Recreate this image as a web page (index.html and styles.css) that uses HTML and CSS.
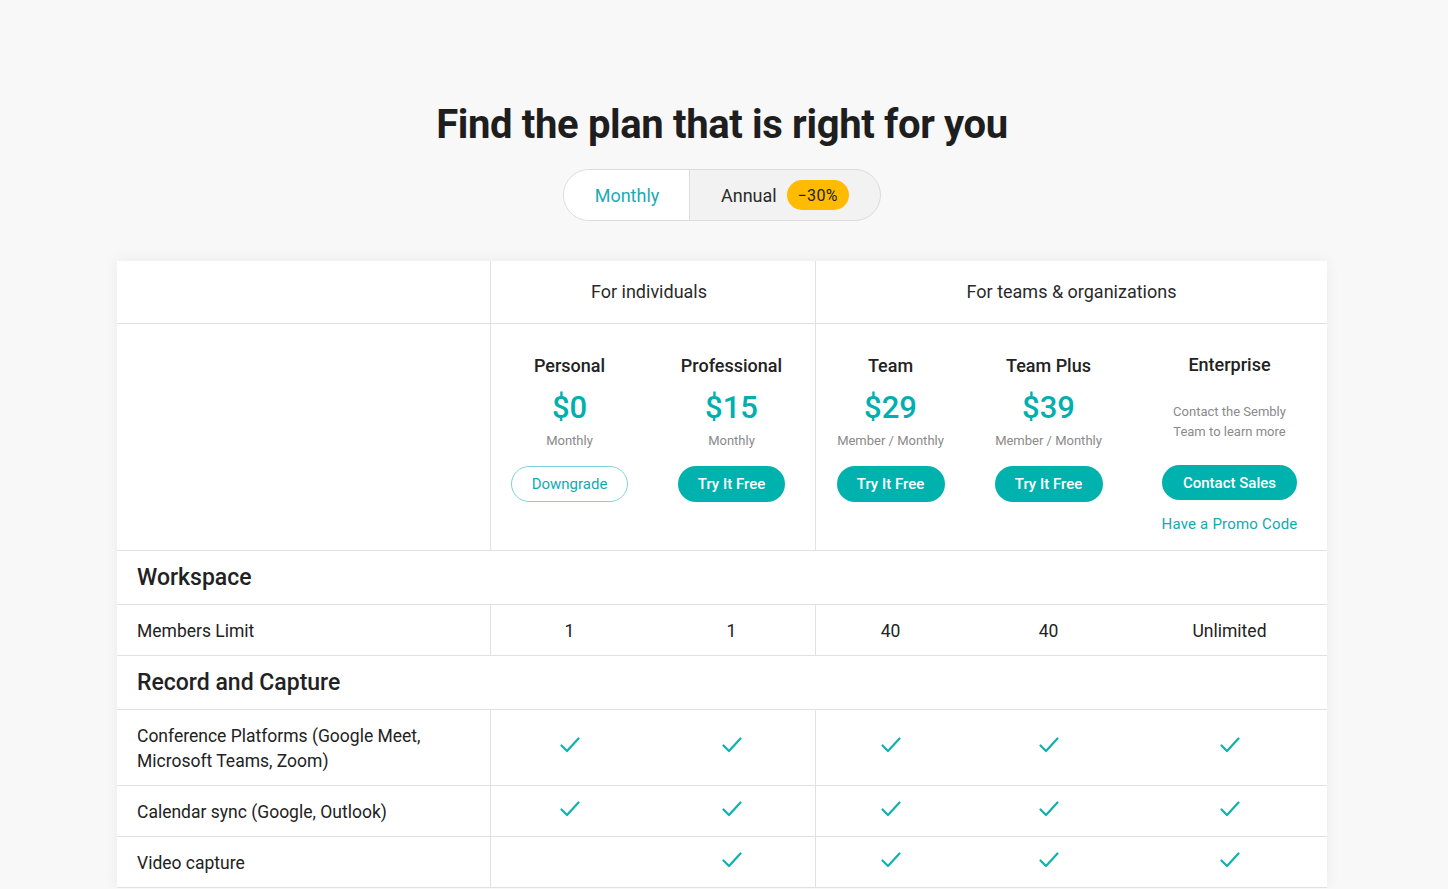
FILE: index.html
```html
<!DOCTYPE html>
<html lang="en">
<head>
<meta charset="utf-8">
<title>Pricing</title>
<link rel="stylesheet" href="styles.css">
</head>
<body>
<main class="page">
  <h1 class="title">Find the plan that is right for you</h1>
  <div class="toggle">
    <button class="toggle-opt toggle-active">Monthly</button>
    <button class="toggle-opt toggle-annual">Annual <span class="badge">−30%</span></button>
  </div>

  <section class="table">
    <div class="row row-group">
      <div class="cell cell-label sep"></div>
      <div class="cell group group-ind sep">For individuals</div>
      <div class="cell group">For teams &amp; organizations</div>
    </div>

    <div class="row row-plans">
      <div class="cell sep"></div>
      <div class="cell plan">
        <div class="plan-name">Personal</div>
        <div class="plan-price">$0</div>
        <div class="plan-period">Monthly</div>
        <button class="btn btn-outline">Downgrade</button>
      </div>
      <div class="cell plan sep">
        <div class="plan-name">Professional</div>
        <div class="plan-price">$15</div>
        <div class="plan-period">Monthly</div>
        <button class="btn btn-fill btn-try">Try It Free</button>
      </div>
      <div class="cell plan">
        <div class="plan-name">Team</div>
        <div class="plan-price">$29</div>
        <div class="plan-period">Member / Monthly</div>
        <button class="btn btn-fill btn-team">Try It Free</button>
      </div>
      <div class="cell plan">
        <div class="plan-name">Team Plus</div>
        <div class="plan-price">$39</div>
        <div class="plan-period">Member / Monthly</div>
        <button class="btn btn-fill btn-team">Try It Free</button>
      </div>
      <div class="cell plan">
        <div class="plan-name plan-name-ent">Enterprise</div>
        <div class="plan-desc">Contact the Sembly<br>Team to learn more</div>
        <button class="btn btn-fill btn-contact">Contact Sales</button>
        <a class="promo" href="#">Have a Promo Code</a>
      </div>
    </div>

    <div class="row row-section"><div class="section-title">Workspace</div></div>

    <div class="row row-feature">
      <div class="cell feat-label sep">Members Limit</div>
      <div class="cell val">1</div>
      <div class="cell val sep">1</div>
      <div class="cell val">40</div>
      <div class="cell val">40</div>
      <div class="cell val">Unlimited</div>
    </div>

    <div class="row row-section"><div class="section-title">Record and Capture</div></div>

    <div class="row row-feature row-tall">
      <div class="cell feat-label sep">Conference Platforms (Google Meet,<br>Microsoft Teams, Zoom)</div>
      <div class="cell val"><svg class="check" viewBox="0 0 20 16"><polyline points="1.5,8.5 7,14 18.5,1.5"/></svg></div>
      <div class="cell val sep"><svg class="check" viewBox="0 0 20 16"><polyline points="1.5,8.5 7,14 18.5,1.5"/></svg></div>
      <div class="cell val"><svg class="check" viewBox="0 0 20 16"><polyline points="1.5,8.5 7,14 18.5,1.5"/></svg></div>
      <div class="cell val"><svg class="check" viewBox="0 0 20 16"><polyline points="1.5,8.5 7,14 18.5,1.5"/></svg></div>
      <div class="cell val"><svg class="check" viewBox="0 0 20 16"><polyline points="1.5,8.5 7,14 18.5,1.5"/></svg></div>
    </div>

    <div class="row row-feature">
      <div class="cell feat-label sep">Calendar sync (Google, Outlook)</div>
      <div class="cell val"><svg class="check" viewBox="0 0 20 16"><polyline points="1.5,8.5 7,14 18.5,1.5"/></svg></div>
      <div class="cell val sep"><svg class="check" viewBox="0 0 20 16"><polyline points="1.5,8.5 7,14 18.5,1.5"/></svg></div>
      <div class="cell val"><svg class="check" viewBox="0 0 20 16"><polyline points="1.5,8.5 7,14 18.5,1.5"/></svg></div>
      <div class="cell val"><svg class="check" viewBox="0 0 20 16"><polyline points="1.5,8.5 7,14 18.5,1.5"/></svg></div>
      <div class="cell val"><svg class="check" viewBox="0 0 20 16"><polyline points="1.5,8.5 7,14 18.5,1.5"/></svg></div>
    </div>

    <div class="row row-feature">
      <div class="cell feat-label sep">Video capture</div>
      <div class="cell val"></div>
      <div class="cell val sep"><svg class="check" viewBox="0 0 20 16"><polyline points="1.5,8.5 7,14 18.5,1.5"/></svg></div>
      <div class="cell val"><svg class="check" viewBox="0 0 20 16"><polyline points="1.5,8.5 7,14 18.5,1.5"/></svg></div>
      <div class="cell val"><svg class="check" viewBox="0 0 20 16"><polyline points="1.5,8.5 7,14 18.5,1.5"/></svg></div>
      <div class="cell val"><svg class="check" viewBox="0 0 20 16"><polyline points="1.5,8.5 7,14 18.5,1.5"/></svg></div>
    </div>
  </section>
</main>
</body>
</html>
```

FILE: styles.css
```css
* { box-sizing: border-box; }

html, body {
  margin: 0;
  padding: 0;
  background: #f8f8f8;
  font-family: Roboto, "Liberation Sans", Arial, sans-serif;
  color: #222;
  overflow: hidden;
}

.page {
  padding: 101px 4px 0 0;
  display: flex;
  flex-direction: column;
  align-items: center;
}

.title {
  margin: 0;
  font-size: 40px;
  line-height: 48px;
  font-weight: 700;
  color: #1e1e1e;
  letter-spacing: -0.35px;
}

.toggle {
  margin-top: 20px;
  display: flex;
  height: 52px;
  border: 1px solid #dcdcdc;
  border-radius: 26px;
  overflow: hidden;
  background: #f2f2f2;
}

.toggle-opt {
  border: none;
  background: transparent;
  font-family: inherit;
  font-size: 18px;
  color: #2a2a2a;
  display: flex;
  align-items: center;
  padding: 0;
  cursor: pointer;
}

.toggle-active {
  width: 126px;
  justify-content: center;
  background: #fff;
  color: #1aabb6;
  border-right: 1px solid #dcdcdc;
  padding-left: 1px;
}

.toggle-annual {
  width: 190px;
  padding-left: 31px;
  gap: 10px;
}

.badge {
  display: inline-flex;
  align-items: center;
  justify-content: center;
  width: 62px;
  height: 30px;
  border-radius: 15px;
  background: #ffbb00;
  color: #222;
  font-size: 16px;
  letter-spacing: 0.4px;
}

.table {
  margin-top: 40px;
  width: 1210px;
  background: #fff;
  box-shadow: 0 0 14px rgba(0, 0, 0, 0.06);
}

.row {
  display: grid;
  grid-template-columns: 374px 157px 168px 149px 167px 195px;
  border-bottom: 1px solid #e1e1e1;
}

.row-group {
  grid-template-columns: 374px 325px 511px;
  height: 63px;
}

.cell {
  display: flex;
  align-items: center;
  justify-content: center;
}

.sep { border-right: 1px solid #e1e1e1; }

.group {
  font-size: 18px;
  color: #2a2a2a;
  padding-bottom: 1px;
}

.group-ind { padding-right: 8px; }

.row-plans { height: 227px; }

.plan {
  flex-direction: column;
  justify-content: flex-start;
  padding-top: 30px;
}

.plan-name {
  font-size: 18px;
  line-height: 24px;
  font-weight: 500;
  color: #222;
}

.plan-name-ent { margin-top: -1px; }

.plan-price {
  margin-top: 12px;
  font-size: 31px;
  line-height: 36px;
  font-weight: 500;
  color: #00b0ae;
}

.plan-period {
  margin-top: 6px;
  font-size: 13px;
  line-height: 18px;
  color: #8a8a8a;
}

.plan-desc {
  margin-top: 25px;
  font-size: 13px;
  line-height: 20px;
  color: #8a8a8a;
  text-align: center;
}

.btn {
  font-family: inherit;
  font-size: 15px;
  border-radius: 18px;
  height: 36px;
  padding: 0;
  cursor: pointer;
}

.btn-outline {
  margin-top: 16px;
  width: 117px;
  background: #fff;
  border: 1px solid #7fd3d6;
  color: #12a9b3;
}

.btn-fill {
  margin-top: 16px;
  border: none;
  background: #00b2ae;
  color: #fff;
  font-weight: 500;
}

.btn-try { width: 107px; }
.btn-team { width: 108px; }

.btn-contact {
  margin-top: 23px;
  width: 135px;
  height: 35px;
}

.promo {
  margin-top: 15px;
  font-size: 15px;
  line-height: 18px;
  color: #12a9b3;
  text-decoration: none;
  letter-spacing: 0.2px;
}

.row-section {
  display: flex;
  align-items: center;
  height: 54px;
  padding-left: 20px;
}

.section-title {
  font-size: 23px;
  font-weight: 500;
  color: #222;
}

.row-feature { height: 51px; }
.row-tall { height: 76px; }

.feat-label {
  justify-content: flex-start;
  padding-left: 20px;
  padding-top: 2px;
  font-size: 17.5px;
  line-height: 25px;
  color: #222;
}

.val {
  padding-top: 2px;
  font-size: 17.5px;
  color: #222;
}

.check {
  width: 20px;
  height: 16px;
  margin-top: -7px;
  fill: none;
  stroke: #0fb2ae;
  stroke-width: 2.2;
  stroke-linecap: round;
  stroke-linejoin: round;
}
```
